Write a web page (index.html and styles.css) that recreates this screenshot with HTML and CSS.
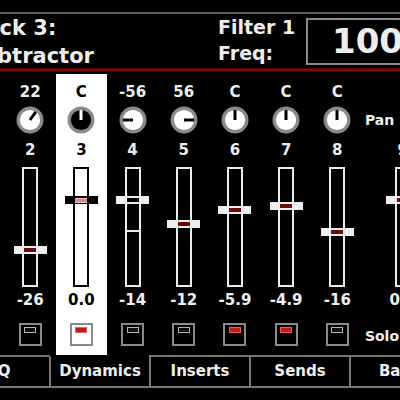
FILE: index.html
```html
<!DOCTYPE html>
<html>
<head>
<meta charset="utf-8">
<link rel="stylesheet" href="styles.css">
</head>
<body>
<div class="screen">
  <div class="header">
    <div class="title"><div class="t1">Track 3:</div><div class="t2">Subtractor</div></div>
    <div class="param">Filter 1<br>Freq:</div>
    <div class="valbox">1000 Hz</div>
  </div>
  <div class="redline"></div>
  <div class="mixer">
    <div class="strip">
      <div class="val">22</div>
      <svg class="knob" viewBox="0 0 28 28"><circle cx="14" cy="14" r="11.8" class="kf"/><line x1="14" y1="14" x2="14" y2="4" class="kp" transform="rotate(35 14 14)"/></svg>
      <div class="num">2</div>
      <div class="track"><div class="handle" style="top:77px"><span class="grip"></span></div></div>
      <div class="db">-26</div>
      <div class="btn"><span class="ind"></span></div>
    </div>
    <div class="strip sel">
      <div class="val">C</div>
      <svg class="knob" viewBox="0 0 28 28"><circle cx="14" cy="14" r="11.8" class="kf"/><line x1="14" y1="14" x2="14" y2="4" class="kp" transform="rotate(0 14 14)"/></svg>
      <div class="num">3</div>
      <div class="track"><div class="handle" style="top:27px"><span class="grip"></span></div></div>
      <div class="db">0.0</div>
      <div class="btn"><span class="ind on"></span></div>
    </div>
    <div class="strip">
      <div class="val">-56</div>
      <svg class="knob" viewBox="0 0 28 28"><circle cx="14" cy="14" r="11.8" class="kf"/><line x1="14" y1="14" x2="14" y2="4" class="kp" transform="rotate(-90 14 14)"/></svg>
      <div class="num">4</div>
      <div class="track"><div class="mark"></div><div class="handle hollow" style="top:27px"><span class="grip"></span></div></div>
      <div class="db">-14</div>
      <div class="btn"><span class="ind"></span></div>
    </div>
    <div class="strip">
      <div class="val">56</div>
      <svg class="knob" viewBox="0 0 28 28"><circle cx="14" cy="14" r="11.8" class="kf"/><line x1="14" y1="14" x2="14" y2="4" class="kp" transform="rotate(90 14 14)"/></svg>
      <div class="num">5</div>
      <div class="track"><div class="handle" style="top:51px"><span class="grip"></span></div></div>
      <div class="db">-12</div>
      <div class="btn"><span class="ind"></span></div>
    </div>
    <div class="strip">
      <div class="val">C</div>
      <svg class="knob" viewBox="0 0 28 28"><circle cx="14" cy="14" r="11.8" class="kf"/><line x1="14" y1="14" x2="14" y2="4" class="kp" transform="rotate(0 14 14)"/></svg>
      <div class="num">6</div>
      <div class="track"><div class="handle" style="top:37px"><span class="grip"></span></div></div>
      <div class="db">-5.9</div>
      <div class="btn"><span class="ind on"></span></div>
    </div>
    <div class="strip">
      <div class="val">C</div>
      <svg class="knob" viewBox="0 0 28 28"><circle cx="14" cy="14" r="11.8" class="kf"/><line x1="14" y1="14" x2="14" y2="4" class="kp" transform="rotate(0 14 14)"/></svg>
      <div class="num">7</div>
      <div class="track"><div class="handle" style="top:33px"><span class="grip"></span></div></div>
      <div class="db">-4.9</div>
      <div class="btn"><span class="ind on"></span></div>
    </div>
    <div class="strip">
      <div class="val">C</div>
      <svg class="knob" viewBox="0 0 28 28"><circle cx="14" cy="14" r="11.8" class="kf"/><line x1="14" y1="14" x2="14" y2="4" class="kp" transform="rotate(0 14 14)"/></svg>
      <div class="num">8</div>
      <div class="track"><div class="handle" style="top:59px"><span class="grip"></span></div></div>
      <div class="db">-16</div>
      <div class="btn"><span class="ind"></span></div>
    </div>
    <div class="labels">
      <div class="lab-pan">Pan</div>
      <div class="lab-solo">Solo</div>
    </div>
    <div class="strip">
      <div class="val blank"></div>
      <div class="knob blank"></div>
      <div class="num">9</div>
      <div class="track"><div class="handle" style="top:27px"><span class="grip"></span></div></div>
      <div class="db">0.0</div>
      <div class="btn blank"></div>
    </div>
  </div>
  <div class="tabs">
    <div class="tab first">EQ</div>
    <div class="tab active">Dynamics</div>
    <div class="tab">Inserts</div>
    <div class="tab">Sends</div>
    <div class="tab">Bank</div>
  </div>
</div>
</body>
</html>
```

FILE: styles.css
```css
* { box-sizing: border-box; }
body { margin: 0; background: #000; }
.screen {
  width: 400px; height: 400px; overflow: hidden; background: #000;
  font-family: "DejaVu Sans", "Liberation Sans", sans-serif; font-weight: bold; color: #eeeeee;
}
.header {
  margin-top: 12px; border-top: 2px solid #5c5c5c; height: 56px;
  display: flex;
}
.title {
  flex: 0 0 255px; min-width: 0; margin-left: -37px; font-size: 21px; line-height: 28px; white-space: nowrap;
}
.t2 { margin-left: 4px; }
.param {
  flex: 0 0 88px; min-width: 0; font-size: 19px; line-height: 26px; white-space: nowrap;
}
.valbox {
  flex: 0 0 160px; min-width: 0; margin-top: 4px; height: 47px;
  border: 2px solid #8a8a8a; padding-left: 24px;
  font-size: 34px; line-height: 43px; white-space: nowrap;
}
.redline {
  height: 4px;
  background: linear-gradient(#3a0000, #8e0f0f, #3a0000);
}
.mixer {
  display: flex; margin-top: 2px; padding-left: 4.6px; height: 281px;
}
.strip {
  flex: 0 0 51.2px; min-width: 0; display: flex; flex-direction: column; align-items: center;
  padding-top: 6px;
}
.strip.sel { background: #fff; color: #000; }
.val { height: 24px; line-height: 24px; font-size: 15px; white-space: nowrap; }
.knob { margin-top: 2px; width: 28px; height: 28px; flex: 0 0 28px; display: block; }
.kf { fill: #fff; stroke: #8a8a8a; stroke-width: 3.4; }
.kp { stroke: #000; stroke-width: 3; }
.sel .kf { fill: #000; }
.sel .kp { stroke: #fff; }
.num { margin-top: 6px; height: 20px; line-height: 20px; font-size: 15px; }
.track {
  margin-top: 7px; width: 16px; height: 120px; flex: 0 0 120px;
  border: 2px solid #ececec; background: #000; position: relative;
}
.sel .track { border-color: #000; background: #fff; }
.handle {
  position: absolute; left: 50%; margin-left: -16.5px; width: 33px; height: 8px;
  background: #eeeeee; display: flex; align-items: center; justify-content: center;
}
.grip { width: 12px; height: 4px; background: #6a0c0c; }
.sel .handle { background: #000; }
.sel .grip { background: #d88a8a; height: 5px; border-top: 1px solid #f0c0c0; border-bottom: 1px solid #f0c0c0; }
.handle.hollow .grip { background: #000; width: 12px; }
.mark { position: absolute; left: 0; right: 0; top: 61px; height: 2px; background: #ececec; }
.db { margin-top: 3px; height: 20px; line-height: 20px; font-size: 15px; white-space: nowrap; }
.btn {
  margin-top: 13px; width: 23px; height: 23px; flex: 0 0 23px;
  border: 2px solid #8a8a8a; background: #000;
  display: flex; justify-content: center; align-items: flex-start; padding-top: 2px;
}
.sel .btn { background: #fff; }
.ind { width: 12px; height: 6px; border: 1px solid #b4b4b4; background: #111; }
.ind.on { background: #cc1616; border-color: #e46060; }
.btn.blank, .val.blank, .knob.blank { visibility: hidden; }
.labels {
  flex: 0 0 14.2px; min-width: 0; display: flex; flex-direction: column; align-items: flex-start;
  white-space: nowrap; font-size: 14px; padding-left: 2px;
}
.lab-pan { margin-top: 32px; height: 28px; line-height: 28px; }
.lab-solo { margin-top: 189px; height: 27px; line-height: 27px; }
.tabs {
  display: flex; margin-left: -51px; height: 33px;
}
.tab {
  flex: 0 0 100px; border-top: 2px solid #777; border-bottom: 2px solid #777; border-left: 2px solid #777;
  text-align: center; font-size: 15px; line-height: 29px; white-space: nowrap;
}
.tab.first { border-left: none; }
.tab.active { border-top-color: #000; }
```
